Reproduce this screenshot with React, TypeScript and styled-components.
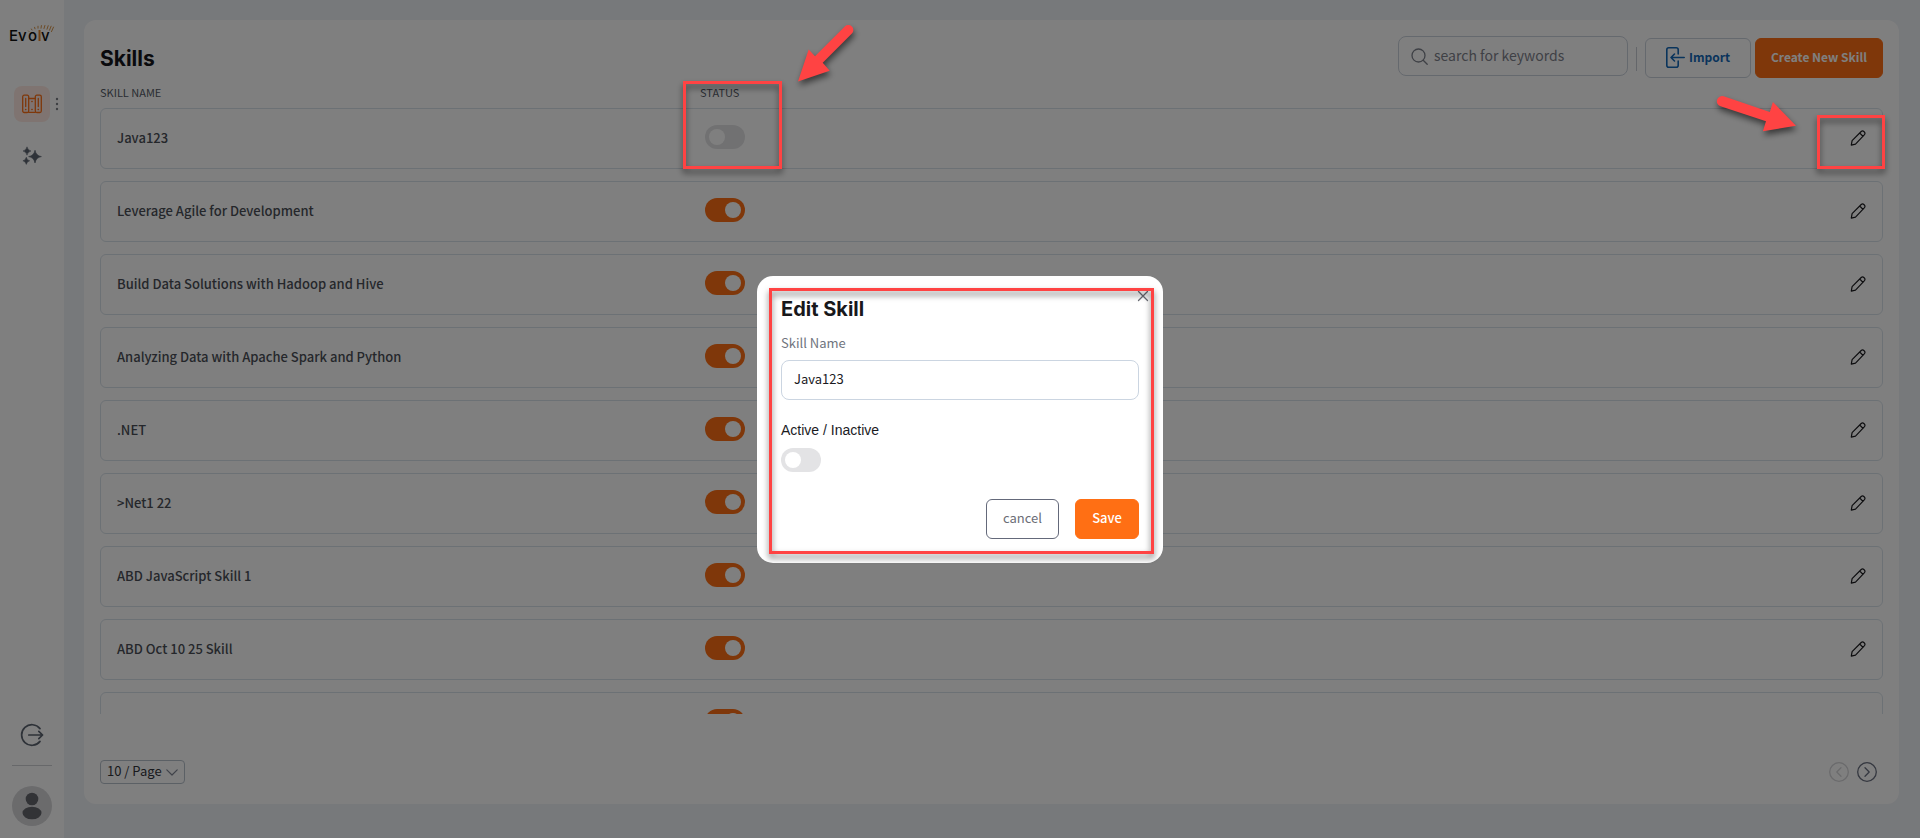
import React, { useState } from 'react';
import styled, { createGlobalStyle } from 'styled-components';

const body = '"Noto Sans CJK JP", "Noto Sans", sans-serif';
const heading = 'Inter, "Open Sans", sans-serif';
const orange = '#ff6f14';
const slate = '#64697a';
const line = '#d9e2ea';
const red = '#ff4343';

const GlobalStyle = createGlobalStyle`
  * { box-sizing: border-box; }
  body { margin: 0; font-family: ${body}; font-size: 13px; line-height: 20px; color: #1b1b1f; }
  button, input, select { font: inherit; color: inherit; }
  button { cursor: pointer; }
`;

const Shell = styled.div`
  display: flex;
  height: 100vh;
  min-height: 480px;
  background: #eff2f6;
`;

const Sidebar = styled.nav`
  width: 64px;
  flex: none;
  display: flex;
  flex-direction: column;
  align-items: center;
  padding: 24px 0 12px;
  background: #fff;
`;

const NavButton = styled.button<{ $active?: boolean }>`
  position: relative;
  width: 36px;
  height: 36px;
  display: grid;
  place-items: center;
  padding: 0;
  border: 0;
  border-radius: 8px;
  color: ${(p) => (p.$active ? orange : '#5c6470')};
  background: ${(p) => (p.$active ? '#ffe9e2' : 'transparent')};
`;

const NavGroup = styled.div`
  display: flex;
  flex-direction: column;
  gap: 16px;
  margin-top: 40px;
`;

const Dots = styled.svg`
  position: absolute;
  left: 41px;
  top: 11px;
`;

const SidebarFoot = styled.div`
  margin-top: auto;
  display: flex;
  flex-direction: column;
  align-items: center;
`;

const Rule = styled.hr`
  width: 40px;
  height: 1px;
  margin: 18px 0 20px;
  border: 0;
  background: #cfd0d4;
`;

const AvatarButton = styled.button`
  width: 40px;
  height: 40px;
  padding: 0;
  border: 0;
  border-radius: 50%;
  background: none;
  svg { display: block; }
`;

const Main = styled.main`
  flex: 1;
  min-width: 0;
  padding: 20px 21px 34px 20px;
`;

const Card = styled.section`
  height: 100%;
  display: flex;
  flex-direction: column;
  padding: 16px 16px 20px;
  border-radius: 12px;
  background: #fff;
`;

const Toolbar = styled.header`
  display: flex;
  align-items: flex-start;
  height: 49px;
`;

const Title = styled.h1`
  margin: 11px auto 0 0;
  font: 700 21px/24px ${heading};
  color: #14141a;
`;

const SearchBox = styled.label`
  width: 230px;
  height: 40px;
  display: flex;
  align-items: center;
  gap: 6px;
  margin-right: 8px;
  padding: 0 12px;
  border: 1px solid #cbd2dc;
  border-radius: 8px;
  color: #7e828c;
`;

const SearchInput = styled.input`
  min-width: 0;
  flex: 1;
  padding: 0 0 2px;
  border: 0;
  outline: 0;
  background: none;
  font-size: 14px;
  &::placeholder { color: #7e828c; opacity: 1; }
`;

const Divider = styled.span`
  width: 1px;
  height: 24px;
  margin: 11px 8px 0 0;
  background: #c9cdd4;
`;

const Button = styled.button<{ $kind: 'primary' | 'outline' | 'import'; $strong?: boolean }>`
  height: 40px;
  display: flex;
  align-items: center;
  justify-content: center;
  gap: 4px;
  padding: 0 0 2px;
  border-radius: 6px;
  font-size: ${(p) => (p.$strong ? 12 : 13)}px;
  font-weight: ${(p) => (p.$strong ? 700 : p.$kind === 'primary' ? 500 : 400)};
  border: 1px solid ${(p) => ({ primary: orange, outline: slate, import: '#cbd2dc' })[p.$kind]};
  background: ${(p) => (p.$kind === 'primary' ? orange : '#fff')};
  color: ${(p) => ({ primary: '#fff', outline: '#6b6d76', import: '#1368b8' })[p.$kind]};
`;

const ImportButton = styled(Button)`
  width: 106px;
  margin: 2px 4px 0 0;
`;

const CreateButton = styled(Button)`
  width: 128px;
  margin-top: 2px;
`;

const Table = styled.table`
  flex: 1;
  min-height: 0;
  display: flex;
  flex-direction: column;
`;

const HeadRow = styled.tr`
  display: grid;
  grid-template-columns: calc((100% - 34px) / 3 + 17px) 1fr;
  margin-bottom: 9px;
`;

const HeadCell = styled.th`
  padding: 0;
  text-align: left;
  font-size: 11px;
  line-height: 14px;
  font-weight: 400;
  color: #545a66;
`;

const Body = styled.tbody`
  flex: 1;
  min-height: 0;
  display: flex;
  flex-direction: column;
  gap: 12px;
  overflow-y: auto;
  scrollbar-width: none;
`;

const Row = styled.tr`
  flex: none;
  height: 61px;
  display: grid;
  grid-template-columns: repeat(3, 1fr);
  align-items: center;
  padding: 0 16px 2px;
  border: 1px solid ${line};
  border-radius: 6px;
`;

const NameCell = styled.td`
  padding: 0;
  font-weight: 500;
  color: #4b4f57;
`;

const StatusCell = styled.td`
  display: flex;
  padding: 0 0 1px 5px;
`;

const ActionCell = styled.td`
  display: flex;
  justify-content: flex-end;
  padding: 0;
`;

const IconButton = styled.button`
  display: grid;
  place-items: center;
  padding: 0;
  border: 0;
  background: none;
  color: #1b1b1f;
`;

const Switch = styled.input`
  appearance: none;
  width: 40px;
  height: 24px;
  margin: 0;
  padding: 4px;
  border-radius: 12px;
  background: #e3e3e5;
  cursor: pointer;
  &::before {
    content: '';
    display: block;
    width: 16px;
    height: 16px;
    border-radius: 50%;
    background: #fff;
  }
  &:checked { background: ${orange}; }
  &:checked::before { margin-left: 16px; }
`;

const Footer = styled.footer`
  display: flex;
  align-items: center;
  justify-content: space-between;
  margin-top: 46px;
  height: 24px;
`;

const PageSize = styled.div`
  position: relative;
  width: 85px;
  height: 24px;
  color: #808694;
  svg { position: absolute; right: 7px; top: 9px; pointer-events: none; }
`;

const PageSelect = styled.select`
  appearance: none;
  width: 100%;
  height: 100%;
  padding: 0 0 2px 6px;
  border: 1px solid #b7c0cb;
  border-radius: 4px;
  background: transparent;
  color: #33353b;
  line-height: 20px;
`;

const Pager = styled.div`
  display: flex;
  gap: 8px;
  padding-right: 6px;
`;

const PageButton = styled(IconButton)`
  color: #6a7080;
  &:disabled { color: #d5d5d8; }
`;

const Backdrop = styled.div`
  position: fixed;
  inset: 0;
  display: grid;
  place-items: center;
  background: rgba(0, 0, 0, 0.5);
`;

const Modal = styled.form`
  position: relative;
  width: 406px;
  display: flex;
  flex-direction: column;
  align-items: flex-start;
  padding: 21px 24px 24px;
  border-radius: 16px;
  background: #fff;
`;

const ModalTitle = styled.h2`
  margin: 0;
  font: 700 20px/24px ${heading};
  color: #18181b;
`;

const CloseButton = styled(IconButton)`
  position: absolute;
  top: 14px;
  right: 14px;
  color: #6b6d76;
`;

const FieldLabel = styled.label`
  margin-top: 12px;
  color: #70747e;
`;

const TextInput = styled.input`
  width: 100%;
  height: 40px;
  margin-top: 7px;
  padding: 0 12px 2px;
  border: 1px solid #cbd5e1;
  border-radius: 8px;
  outline: 0;
`;

const SwitchLabel = styled.label`
  margin: 20px 0 8px;
  font-family: "Liberation Sans", Arial, sans-serif;
  font-size: 14px;
`;

const Actions = styled.div`
  align-self: stretch;
  display: flex;
  justify-content: flex-end;
  gap: 16px;
  margin-top: 27px;
`;

const CancelButton = styled(Button)`
  width: 73px;
`;

const SaveButton = styled(Button)`
  width: 64px;
`;

const Mark = styled.div`
  position: absolute;
  border: 3px solid ${red};
  filter: drop-shadow(0 4px 3px rgba(0, 0, 0, 0.55));
  pointer-events: none;
`;

const ModalMark = styled(Mark)`
  inset: 12px 9px 9px 12px;
`;

const StatusMark = styled(Mark)`
  left: 683px;
  top: 81px;
  width: 99px;
  height: 88px;
`;

const PencilMark = styled(Mark)`
  right: 35px;
  top: 115px;
  width: 68px;
  height: 54px;
`;

const Arrow = styled.svg`
  position: absolute;
  overflow: visible;
  fill: ${red};
  filter: drop-shadow(1px 4px 3px rgba(0, 0, 0, 0.55));
  pointer-events: none;
`;

const StatusArrow = styled(Arrow)`
  left: 798px;
  top: 25px;
`;

const PencilArrow = styled(Arrow)`
  right: 124px;
  top: 96px;
`;

const Logo = () => (
  <svg width="46" height="22" viewBox="0 0 46 22" role="img" aria-label="Evolv">
    <g fontFamily="Inter, sans-serif" fontSize="15" fontWeight="500" fill="#111">
      <text x="0" y="17">Ev</text>
      <text x="19" y="17">o</text>
      <text x="32" y="17">v</text>
    </g>
    <path d="M30.500 6v11" stroke="#e8892b" strokeWidth="2" />
    <g stroke="#d9954a" strokeWidth="1" strokeLinecap="round">
      <path d="M20 7.500l-.6-.6M23 6l-.6-1M26 4.800l-.4-1.500M29 4.200v-2M32 4.200l.4-2.600M35 4.500l.9-3M38 5.200l1.200-3.500M40.500 6.200l1.600-4M42.500 7.600l2-4.500" />
    </g>
  </svg>
);

const BooksIcon = () => (
  <svg width="20" height="20" viewBox="0 0 20 20" fill="none" stroke="currentColor" strokeWidth="1.300" strokeLinecap="round">
    <rect x=".7" y="1.200" width="6" height="17.300" rx="1.500" />
    <rect x="13.300" y="1.200" width="6" height="17.300" rx="1.500" />
    <path d="M6.700 4.500h6.600M6.700 18.300h6.600M3.700 4.500v8M16.300 4.500v8M3.500 15.500h.4M16.100 15.500h.4M9.800 7.500h.4M9.800 15.500h.4" />
  </svg>
);

const SparklesIcon = () => (
  <svg width="20" height="20" viewBox="0 0 20 20" fill="currentColor">
    <path d="M13 4.200q1.100 5.500 6.400 6.400-5.300.9-6.400 6.400-1.100-5.500-6.400-6.400 5.300-.9 6.400-6.400z" stroke="currentColor" strokeWidth=".6" />
    <path d="M5 .8q.7 3.500 4 4.200-3.300.7-4 4.200Q4.300 5.700 1 5q3.300-.7 4-4.200zM4.300 11.200q.6 3 3.400 3.600-2.800.6-3.400 3.600-.6-3-3.400-3.600 2.800-.6 3.400-3.600z" stroke="currentColor" strokeWidth=".5" />
  </svg>
);

const LogoutIcon = () => (
  <svg width="24" height="24" viewBox="0 0 24 24" fill="none" stroke="#5c6470" strokeWidth="1.700" strokeLinecap="round" strokeLinejoin="round">
    <path d="M20 5.600a10.300 10.300 0 1 0 0 12.800M8.800 12h13.600M18.800 8.300l3.800 3.700-3.800 3.700" />
  </svg>
);

const AvatarIcon = () => (
  <svg width="40" height="40" viewBox="0 0 40 40">
    <circle cx="20" cy="20" r="20" fill="#d6d6d9" />
    <circle cx="20" cy="13" r="6.300" fill="#64666c" />
    <ellipse cx="20" cy="27" rx="9.500" ry="6.300" fill="#64666c" />
  </svg>
);

const SearchIcon = () => (
  <svg width="17" height="17" viewBox="0 0 17 17" fill="none" stroke="currentColor" strokeWidth="1.300" strokeLinecap="round">
    <circle cx="7.500" cy="7.500" r="6.500" />
    <path d="M12.200 12.200l4 4" />
  </svg>
);

const ImportIcon = () => (
  <svg width="19" height="21" viewBox="0 0 19 21" fill="none" stroke="currentColor" strokeWidth="1.600" strokeLinecap="round" strokeLinejoin="round">
    <path d="M12.200 7V2.800q0-2-2-2H2.800q-2 0-2 2v15.400q0 2 2 2h7.400q2 0 2-2V14M18.200 10.500H5M8.500 7L5 10.500 8.500 14" />
  </svg>
);

const PencilIcon = () => (
  <svg width="16" height="16" viewBox="0 0 16 16" fill="none" stroke="currentColor" strokeWidth="1.200" strokeLinecap="round" strokeLinejoin="round">
    <path d="M1.300 15.200l.8-4.600 9.100-9.100q1.400-1.200 2.900.2t.4 3L5.500 14.100zM9.700 3l3.300 3.300" />
  </svg>
);

const CircleChevron = ({ back }: { back?: boolean }) => (
  <svg width="20" height="20" viewBox="0 0 20 20" fill="none" stroke="currentColor" strokeWidth="1.300" strokeLinecap="round" strokeLinejoin="round">
    <circle cx="10" cy="10" r="9.300" />
    <path d={back ? 'M12 5.800L7.800 10l4.200 4.200' : 'M8 5.800l4.200 4.200L8 14.200'} />
  </svg>
);

const initialSkills = [
  { name: 'Java123', active: false },
  { name: 'Leverage Agile for Development', active: true },
  { name: 'Build Data Solutions with Hadoop and Hive', active: true },
  { name: 'Analyzing Data with Apache Spark and Python', active: true },
  { name: '.NET', active: true },
  { name: '>Net1 22', active: true },
  { name: 'ABD JavaScript Skill 1', active: true },
  { name: 'ABD Oct 10 25 Skill', active: true },
  { name: '', active: true },
];

export default function App() {
  const [skills, setSkills] = useState(initialSkills);
  const [name, setName] = useState('Java123');
  const [active, setActive] = useState(false);

  const toggle = (index: number) =>
    setSkills(skills.map((s, i) => (i === index ? { ...s, active: !s.active } : s)));

  return (
    <>
      <GlobalStyle />
      <Shell>
        <Sidebar>
          <Logo />
          <NavGroup>
            <NavButton $active aria-label="Library">
              <BooksIcon />
              <Dots width="4" height="14" viewBox="0 0 4 14" fill="#7c7f86">
                <circle cx="2" cy="2" r="1.200" />
                <circle cx="2" cy="7" r="1.200" />
                <circle cx="2" cy="12" r="1.200" />
              </Dots>
            </NavButton>
            <NavButton aria-label="Assistant">
              <SparklesIcon />
            </NavButton>
          </NavGroup>
          <SidebarFoot>
            <IconButton aria-label="Log out">
              <LogoutIcon />
            </IconButton>
            <Rule />
            <AvatarButton aria-label="Profile">
              <AvatarIcon />
            </AvatarButton>
          </SidebarFoot>
        </Sidebar>

        <Main>
          <Card>
            <Toolbar>
              <Title>Skills</Title>
              <SearchBox>
                <SearchIcon />
                <SearchInput type="search" aria-label="Search" placeholder="search for keywords" />
              </SearchBox>
              <Divider />
              <ImportButton $kind="import" $strong>
                <ImportIcon />
                Import
              </ImportButton>
              <CreateButton $kind="primary" $strong>Create New Skill</CreateButton>
            </Toolbar>

            <Table>
              <thead>
                <HeadRow>
                  <HeadCell>SKILL NAME</HeadCell>
                  <HeadCell>STATUS</HeadCell>
                </HeadRow>
              </thead>
              <Body>
                {skills.map((skill, i) => (
                  <Row key={i}>
                    <NameCell>{skill.name}</NameCell>
                    <StatusCell>
                      <Switch
                        type="checkbox"
                        role="switch"
                        aria-label="Status"
                        checked={skill.active}
                        onChange={() => toggle(i)}
                      />
                    </StatusCell>
                    <ActionCell>
                      <IconButton aria-label="Edit">
                        <PencilIcon />
                      </IconButton>
                    </ActionCell>
                  </Row>
                ))}
              </Body>
            </Table>

            <Footer>
              <PageSize>
                <PageSelect aria-label="Rows per page">
                  <option>10 / Page</option>
                </PageSelect>
                <svg width="12" height="7" viewBox="0 0 12 7" fill="none" stroke="currentColor" strokeWidth="1.200" strokeLinecap="round" strokeLinejoin="round">
                  <path d="M.8.800L6 6l5.200-5.200" />
                </svg>
              </PageSize>
              <Pager>
                <PageButton disabled aria-label="Previous page">
                  <CircleChevron back />
                </PageButton>
                <PageButton aria-label="Next page">
                  <CircleChevron />
                </PageButton>
              </Pager>
            </Footer>
          </Card>
        </Main>
      </Shell>

      <Backdrop>
        <Modal role="dialog" aria-labelledby="edit-title" onSubmit={(e) => e.preventDefault()}>
          <ModalTitle id="edit-title">Edit Skill</ModalTitle>
          <CloseButton type="button" aria-label="Close">
            <svg width="12" height="12" viewBox="0 0 12 12" fill="none" stroke="currentColor" strokeWidth="1.300" strokeLinecap="round">
              <path d="M1.500 1.500l9 9M10.500 1.500l-9 9" />
            </svg>
          </CloseButton>
          <FieldLabel htmlFor="skill-name">Skill Name</FieldLabel>
          <TextInput id="skill-name" type="text" value={name} onChange={(e) => setName(e.target.value)} />
          <SwitchLabel htmlFor="skill-active">Active / Inactive</SwitchLabel>
          <Switch
            id="skill-active"
            type="checkbox"
            role="switch"
            checked={active}
            onChange={(e) => setActive(e.target.checked)}
          />
          <Actions>
            <CancelButton type="button" $kind="outline">cancel</CancelButton>
            <SaveButton type="submit" $kind="primary">Save</SaveButton>
          </Actions>
          <ModalMark />
        </Modal>
        <StatusMark />
        <PencilMark />
        <StatusArrow width="56" height="57" viewBox="0 0 56 57">
          <path d="M0 56.500L10.700 24.500l6.300 6.700L46.800 1.500a5 5 0 0 1 7.100 7.100L24.700 37.700l7 8z" />
        </StatusArrow>
        <PencilArrow width="79" height="36" viewBox="0 0 79 36">
          <path d="M6.700.3L52.800 16l3.100-10L79 29.800l-33.100 5.500 3.100-10L3.500 10.300A5.200 5.200 0 0 1 6.700.3z" />
        </PencilArrow>
      </Backdrop>
    </>
  );
}
